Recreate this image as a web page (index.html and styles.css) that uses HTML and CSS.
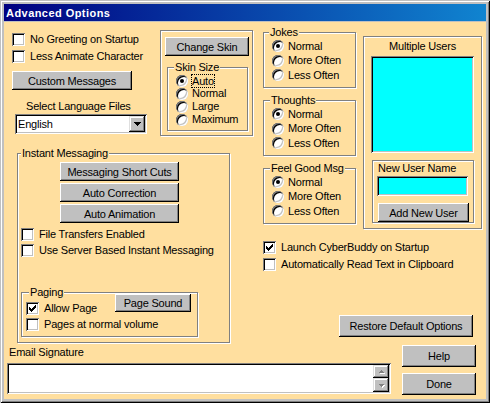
FILE: index.html
```html
<!DOCTYPE html>
<html>
<head>
<meta charset="utf-8">
<title>Advanced Options</title>
<link rel="stylesheet" href="styles.css">
</head>
<body>
<div class="window">
  <div class="titlebar"><span class="title">Advanced Options</span></div>
  <div class="client">
    <div class="top">
      <div class="left">
        <div class="left-top">
          <div class="col-a">
            <div class="check"><span class="box"></span><span class="txt">No Greeting on Startup</span></div>
            <div class="check cb-next"><span class="box"></span><span class="txt">Less Animate Character</span></div>
            <button class="btn btn-custom">Custom Messages</button>
            <div class="lang-label">Select Language Files</div>
            <div class="combo sunken">
              <span class="combo-text">English</span>
              <span class="combo-btn raised"><svg width="7" height="4" viewBox="0 0 7 4"><path d="M0 0h7v1h-1v1h-1v1h-1v1h-1v-1h-1v-1h-1v-1h-1z" fill="#000"/></svg></span>
            </div>
          </div>
          <div class="skin-frame etched">
            <button class="btn btn-skin">Change Skin</button>
            <fieldset class="group skin-size">
              <legend class="lg-skin">Skin Size</legend>
              <div class="radio"><span class="rb on"></span><span class="txt focus">Auto</span></div>
              <div class="radio"><span class="rb"></span><span class="txt">Normal</span></div>
              <div class="radio"><span class="rb"></span><span class="txt">Large</span></div>
              <div class="radio"><span class="rb"></span><span class="txt">Maximum</span></div>
            </fieldset>
          </div>
        </div>
        <fieldset class="group im">
          <legend class="lg-im">Instant Messaging</legend>
          <button class="btn btn-im">Messaging Short Cuts</button>
          <button class="btn btn-im">Auto Correction</button>
          <button class="btn btn-im">Auto Animation</button>
          <div class="check im-c1"><span class="box"></span><span class="txt">File Transfers Enabled</span></div>
          <div class="check im-c2"><span class="box"></span><span class="txt">Use Server Based Instant Messaging</span></div>
          <fieldset class="group paging">
            <legend class="lg-paging">Paging</legend>
            <div class="page-row">
              <div class="check"><span class="box"><svg width="7" height="7" viewBox="0 0 7 7"><path d="M0 2v3h1v1h1v1h1v-1h1v-1h1v-1h1v-1h1v-3h-1v1h-1v1h-1v1h-1v1h-1v-1h-1v-1h-1v-1z" fill="#000"/></svg></span><span class="txt">Allow Page</span></div>
              <button class="btn btn-page">Page Sound</button>
            </div>
            <div class="check page-c2"><span class="box"></span><span class="txt">Pages at normal volume</span></div>
          </fieldset>
        </fieldset>
      </div>
      <div class="right">
        <div class="right-top">
          <div class="col-c">
            <fieldset class="group freq">
              <legend class="lg-jokes">Jokes</legend>
              <div class="radio"><span class="rb on"></span><span class="txt">Normal</span></div>
              <div class="radio"><span class="rb"></span><span class="txt">More Often</span></div>
              <div class="radio"><span class="rb"></span><span class="txt">Less Often</span></div>
            </fieldset>
            <fieldset class="group freq">
              <legend class="lg-thoughts">Thoughts</legend>
              <div class="radio"><span class="rb on"></span><span class="txt">Normal</span></div>
              <div class="radio"><span class="rb"></span><span class="txt">More Often</span></div>
              <div class="radio"><span class="rb"></span><span class="txt">Less Often</span></div>
            </fieldset>
            <fieldset class="group freq">
              <legend class="lg-feel">Feel Good Msg</legend>
              <div class="radio"><span class="rb on"></span><span class="txt">Normal</span></div>
              <div class="radio"><span class="rb"></span><span class="txt">More Often</span></div>
              <div class="radio"><span class="rb"></span><span class="txt">Less Often</span></div>
            </fieldset>
          </div>
          <div class="users etched">
            <div class="users-label">Multiple Users</div>
            <div class="listbox sunken"></div>
            <div class="newuser etched">
              <div class="newuser-label">New User Name</div>
              <div class="textbox sunken"></div>
              <button class="btn btn-add">Add New User</button>
            </div>
          </div>
        </div>
        <div class="launch">
          <div class="check"><span class="box"><svg width="7" height="7" viewBox="0 0 7 7"><path d="M0 2v3h1v1h1v1h1v-1h1v-1h1v-1h1v-1h1v-3h-1v1h-1v1h-1v1h-1v1h-1v-1h-1v-1h-1v-1z" fill="#000"/></svg></span><span class="txt">Launch CyberBuddy on Startup</span></div>
          <div class="check cb-next"><span class="box"></span><span class="txt">Automatically Read Text in Clipboard</span></div>
        </div>
        <button class="btn btn-restore">Restore Default Options</button>
      </div>
    </div>
    <div class="bottom">
      <div class="email">
        <div class="email-label">Email Signature</div>
        <div class="textarea sunken">
          <div class="ta-body"></div>
          <div class="scroll">
            <span class="sbtn raised sb-up"><svg width="5" height="3" viewBox="0 0 5 3"><path d="M2 0h1v1h1v1h1v1h-5v-1h1v-1h1z" fill="#808080"/></svg></span>
            <span class="sbtn raised sb-down"><svg width="5" height="3" viewBox="0 0 5 3"><path d="M0 0h5v1h-1v1h-1v1h-1v-1h-1v-1h-1z" fill="#808080"/></svg></span>
          </div>
        </div>
      </div>
      <div class="actions">
        <button class="btn btn-act">Help</button>
        <button class="btn btn-act btn-done">Done</button>
      </div>
    </div>
  </div>
</div>
</body>
</html>
```
FILE: styles.css
```css
* { box-sizing: border-box; }
html, body { margin: 0; padding: 0; }
body {
  width: 490px;
  height: 403px;
  overflow: hidden;
  background: #c0c0c0;
  font-family: "Liberation Sans", Arial, sans-serif;
  font-size: 11px;
  letter-spacing: -0.2px;
  color: #000;
}
fieldset { margin: 0; padding: 0; min-width: 0; }
legend { padding: 0; }
.window {
  width: 490px;
  height: 403px;
  padding: 4px;
  background: #c0c0c0;
  box-shadow: inset 1px 1px 0 #c0c0c0, inset -1px -1px 0 #000, inset 2px 2px 0 #fff, inset -2px -2px 0 #808080;
  display: flex;
  flex-direction: column;
}
.titlebar {
  height: 17px;
  margin-bottom: 1px;
  flex: none;
  background: linear-gradient(to right, #000080, #1084d0);
  color: #fff;
  font-weight: bold;
  letter-spacing: 0.45px;
  display: flex;
  align-items: center;
  padding-left: 2px;
}
.client {
  flex: 1;
  background: #ffdf9f;
  display: flex;
  flex-direction: column;
}
.top { height: 320px; display: flex; flex: none; }
.left { width: 256px; display: flex; flex-direction: column; align-items: flex-start; }
.left-top { height: 125px; display: flex; flex: none; }
.col-a {
  width: 156px;
  padding-top: 11px;
  display: flex;
  flex-direction: column;
  align-items: flex-start;
}

/* controls */
.check { display: flex; align-items: center; height: 13px; }
.col-a .check { margin-left: 8px; }
.cb-next { margin-top: 4px; }
.box {
  width: 13px;
  height: 13px;
  flex: none;
  background: #fff;
  box-shadow: inset 1px 1px 0 #808080, inset -1px -1px 0 #fff, inset 2px 2px 0 #000, inset -2px -2px 0 #c0c0c0;
  display: flex;
  align-items: center;
  justify-content: center;
}
.box svg { display: block; }
.check .txt { margin-left: 5px; line-height: 13px; white-space: nowrap; }

.radio { display: flex; align-items: center; height: 13px; }
.rb {
  width: 12px;
  height: 12px;
  flex: none;
  border-radius: 50%;
  background: #fff;
  box-shadow: inset 1px 1px 0 #808080, inset -1px -1px 0 #fff, inset 2px 2px 0 #000, inset -2px -2px 0 #c0c0c0;
  display: flex;
  align-items: center;
  justify-content: center;
}
.rb.on::after {
  content: "";
  width: 4px;
  height: 4px;
  border-radius: 50%;
  background: #000;
}
.radio .txt { margin-left: 3px; padding: 0 1px; line-height: 13px; white-space: nowrap; }
.radio .txt.focus { border: 1px dotted #000; padding: 0; line-height: 12px; height: 14px; }

.btn {
  font: inherit;
  letter-spacing: inherit;
  color: #000;
  background: #c0c0c0;
  border: none;
  padding: 0;
  flex: none;
  box-shadow: inset -1px -1px 0 #000, inset 1px 1px 0 #fff, inset -2px -2px 0 #808080;
  display: flex;
  align-items: center;
  justify-content: center;
  white-space: nowrap;
}
.raised {
  background: #c0c0c0;
  box-shadow: inset -1px -1px 0 #000, inset 1px 1px 0 #dfdfdf, inset -2px -2px 0 #808080, inset 2px 2px 0 #fff;
}
.sunken {
  box-shadow: inset 1px 1px 0 #808080, inset -1px -1px 0 #fff, inset 2px 2px 0 #000, inset -2px -2px 0 #c0c0c0;
}
.etched {
  border: 1px solid #808080;
  box-shadow: 1px 1px 0 #fff, inset 1px 1px 0 #fff;
}

.btn-custom { width: 120px; height: 19px; margin: 8px 0 0 8px; }
.lang-label { margin: 10px 0 0 22px; line-height: 13px; white-space: nowrap; }
.combo {
  margin: 1px 0 0 11px;
  width: 132px;
  height: 20px;
  background: #fff;
  display: flex;
  padding: 2px;
}
.combo-text { flex: 1; padding-left: 1px; line-height: 16px; }
.combo-btn {
  width: 16px;
  height: 16px;
  display: flex;
  align-items: center;
  justify-content: center;
}
.combo-btn svg { display: block; }

/* group boxes */
.group {
  border: 1px solid #808080;
  box-shadow: 1px 1px 0 #fff, inset 1px 1px 0 #fff;
  display: flex;
  flex-direction: column;
  align-items: flex-start;
  flex: none;
}
.group > legend {
  padding: 0 1px;
  line-height: 13px;
  height: 13px;
  background: #ffdf9f;
  white-space: nowrap;
}
.group > .lg-skin { margin-left: 6px; }
.group > .lg-im { margin-left: 3px; }
.group > .lg-paging { margin-left: 7px; }
.group > .lg-jokes { margin-left: 5px; }
.group > .lg-thoughts { margin-left: 6px; }
.group > .lg-feel { margin-left: 6px; }

.skin-frame {
  width: 93px;
  height: 106px;
  margin-top: 8px;
  flex: none;
  display: flex;
  flex-direction: column;
  align-items: flex-start;
}
.btn-skin { width: 84px; height: 19px; margin: 6px 0 0 4px; }
.skin-size { width: 81px; height: 70px; margin: 5px 0 0 6px; }
.skin-size .radio { margin-left: 8px; }

.im { width: 213px; height: 196px; margin-left: 13px; }
.btn-im { width: 119px; height: 19px; margin: 2px 0 0 42px; }
.im > .check { margin-left: 3px; }
.im-c1 { margin-top: 5px; }
.im-c2 { margin-top: 3px; }
.paging { width: 177px; height: 51px; margin: 29px 0 0 3px; }
.page-row {
  width: 165px;
  height: 13px;
  margin: 3px 0 0 4px;
  display: flex;
  align-items: flex-start;
}
.btn-page { width: 76px; height: 18px; margin: -8px 0 0 auto; }
.page-c2 { margin: 3px 0 0 4px; }

/* right side */
.right { width: 226px; display: flex; flex-direction: column; align-items: flex-start; }
.right-top { display: flex; flex: none; }
.col-c {
  width: 93px;
  margin-left: 3px;
  padding-top: 4px;
  display: flex;
  flex-direction: column;
}
.freq { width: 93px; height: 62px; }
.freq + .freq { margin-top: 6px; }
.freq .radio { height: 14.5px; margin-left: 8px; }

.users {
  width: 119px;
  height: 193px;
  margin: 14px 0 0 7px;
  display: flex;
  flex-direction: column;
  align-items: flex-start;
}
.users-label { align-self: stretch; text-align: center; line-height: 13px; margin-top: 3px; }
.listbox { width: 103px; height: 97px; margin: 3px 0 0 7px; background: #00ffff; }
.newuser {
  width: 102px;
  height: 63px;
  margin: 7px 0 0 8px;
  display: flex;
  flex-direction: column;
  align-items: flex-start;
}
.newuser-label { margin: 1px 0 0 5px; line-height: 13px; white-space: nowrap; }
.textbox { width: 91px; height: 20px; margin: 1px 0 0 4px; background: #00ffff; }
.btn-add { width: 91px; height: 19px; margin: 7px 0 0 5px; }

.launch { margin: 12px 0 0 3px; }
.btn-restore { width: 134px; height: 22px; margin: 44px 0 0 79px; }

/* bottom */
.bottom { display: flex; flex: 1; }
.email {
  width: 387px;
  padding-left: 3px;
  display: flex;
  flex-direction: column;
  align-items: flex-start;
}
.email-label { margin: 4px 0 0 2px; line-height: 13px; }
.textarea {
  width: 384px;
  height: 31px;
  margin-top: 4px;
  background: #fff;
  padding: 2px;
  display: flex;
}
.ta-body { flex: 1; }
.scroll { width: 16px; display: flex; flex-direction: column; }
.sbtn { display: flex; align-items: center; justify-content: center; }
.sb-up { height: 13px; }
.sb-down { height: 14px; }
.sbtn svg { display: block; filter: drop-shadow(1px 1px 0 #fff); }
.actions { margin-left: 11px; display: flex; flex-direction: column; }
.btn-act { width: 74px; height: 22px; margin-top: 3px; }
.btn-done { margin-top: 6px; }
```
